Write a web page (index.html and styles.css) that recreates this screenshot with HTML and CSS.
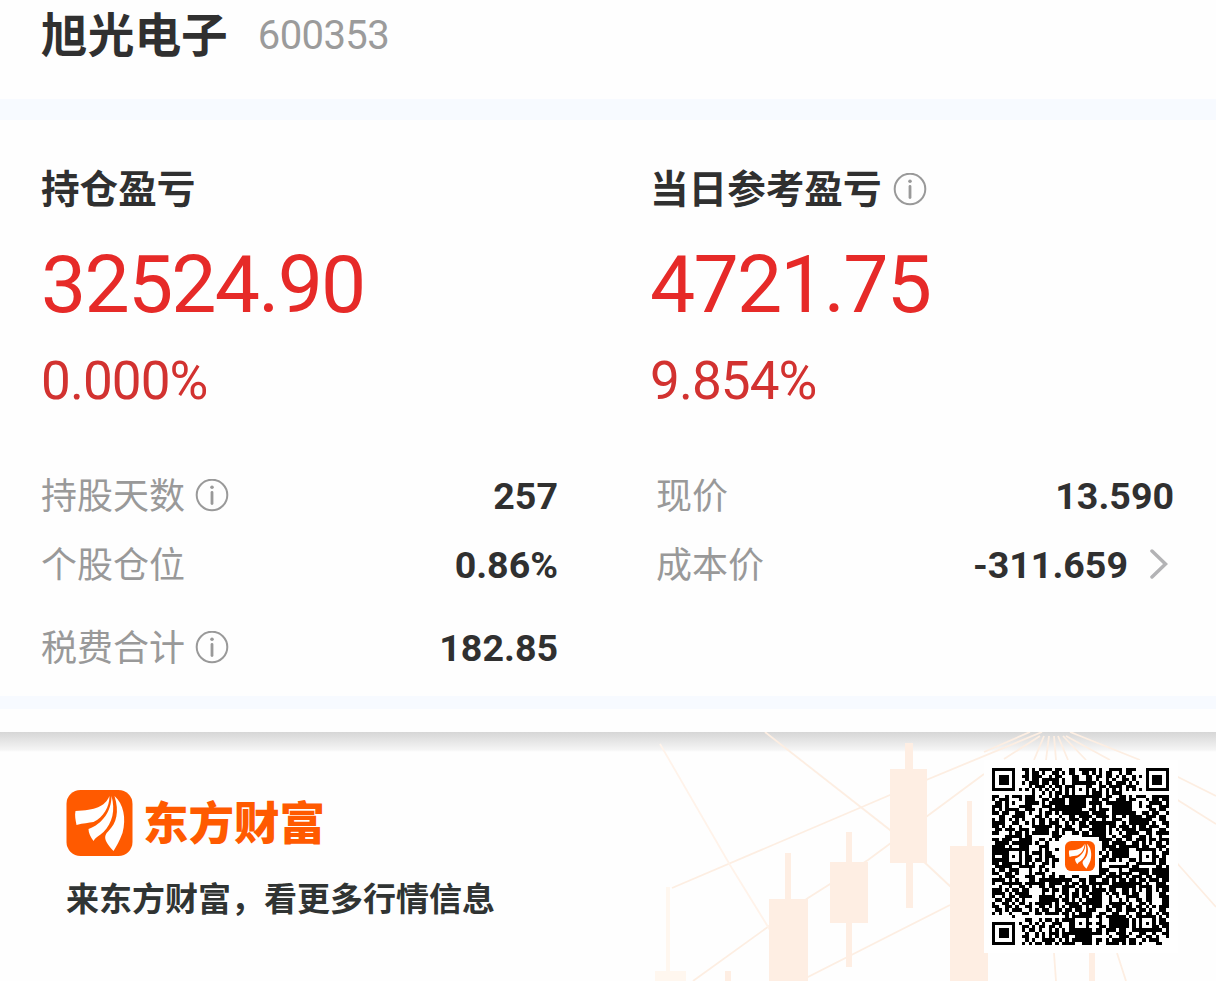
FILE: index.html
```html
<!DOCTYPE html>
<html lang="zh-CN">
<head>
    <meta charset="UTF-8">
    <meta name="viewport" content="width=device-width, initial-scale=1.0">
    <title>旭光电子 600353</title>
    <link rel="stylesheet" href="styles.css">
</head>
<body>
    <svg class="symbols" width="0" height="0">
        <symbol id="info" viewBox="0 0 34 34">
            <circle cx="17" cy="16" r="15.3" fill="none" stroke="currentColor" stroke-width="2"/>
            <circle cx="17" cy="8.3" r="1.8" fill="currentColor"/>
            <path d="M17 13.5v11" stroke="currentColor" stroke-width="2.8" stroke-linecap="round"/>
        </symbol>
        <symbol id="logo" viewBox="0 0 66 66">
            <rect width="66" height="66" rx="14" fill="#ff5a00"/>
            <path fill="#fff" d="M43 6C38 17 29 20 9 21C8 25 9 30 10 35C17 33 22 33 27 32C37 27 43 17 43 6Z"/>
            <path fill="#fff" d="M45 6C45 21 36 34 22 39C22 43 24 47 27 51C29 47 33 46 37 42C46 33 49 20 45 6Z"/>
            <path fill="#fff" d="M48 6C53 22 50 33 42 41C37 46 37 50 47 61C50 56 53 51 56 43C60 28 57 14 48 6Z"/>
        </symbol>
    </svg>

    <header>
        <h1>旭光电子</h1>
        <span class="code">600353</span>
    </header>

    <main>
        <section class="summary">
            <div class="profit">
                <h2>持仓盈亏</h2>
                <div class="amount">32524.90</div>
                <div class="rate">0.000%</div>
            </div>
            <div class="profit">
                <h2>当日参考盈亏 <svg class="info"><use href="#info"/></svg></h2>
                <div class="amount">4721.75</div>
                <div class="rate">9.854%</div>
            </div>
        </section>

        <section class="details">
            <div class="list">
                <div class="row"><span class="label">持股天数</span><svg class="info"><use href="#info"/></svg><b>257</b></div>
                <div class="row"><span class="label">个股仓位</span><b>0.86%</b></div>
                <div class="row last"><span class="label">税费合计</span><svg class="info"><use href="#info"/></svg><b>182.85</b></div>
            </div>
            <div class="list right">
                <div class="row"><span class="label">现价</span><b>13.590</b></div>
                <div class="row"><span class="label">成本价</span><b>-311.659</b>
                    <svg class="arrow" viewBox="0 0 18 32"><path d="M2 2L15.5 15L2 28"/></svg>
                </div>
            </div>
        </section>
    </main>

    <footer>
        <svg class="chart" viewBox="640 732 576 249">
            <g fill="none" stroke="#fdeee2" stroke-width="1.8">
                <path d="M765 732L890 830L952 888"/>
                <path d="M672 888L890 795L1042 732"/>
                <path d="M693 981L808 898L868 860L984 774"/>
                <path d="M800 981L950 905"/>
                <path d="M660 744L730 865L770 930" stroke="#fff3ea"/>
                <path d="M1030 732L984 752M1040 736L1004 759M1044 736L1034 760M1049 736L1046 760M1054 736L1056 760M1058 736L1068 760M1063 736L1086 760M1066 736L1110 760M1070 732L1140 760"/>
                <path d="M1176 776L1216 796M1176 799L1216 824M1176 862L1216 907M1054 953L1056 981M1117 953L1126 981"/>
            </g>
            <g class="candles">
                <path d="M785 853h6v46h17v82h-39v-82h16z"/>
                <path d="M846 832h6v30h16v61h-16v44h-6v-44h-16v-61h16z"/>
                <path d="M905 743h8v26h14v94h-14v45h-7v-45h-16v-94h15z"/>
                <path d="M967 801h5v45h16v135h-38v-135h17z"/>
                <path d="M1089 953h6v28h-6zM725 971h6v10h-6z"/>
                <path class="faint" d="M666 887h4v84h16v10h-31v-10h11z"/>
            </g>
        </svg>
        <div class="brand">
            <div class="logo-line">
                <svg class="logo"><use href="#logo"/></svg>
                <strong>东方财富</strong>
            </div>
            <p>来东方财富，看更多行情信息</p>
        </div>
        <div class="qr">
            <svg id="qr-code" viewBox="0 0 53 53" shape-rendering="crispEdges"></svg>
            <svg class="qr-logo"><use href="#logo"/></svg>
        </div>
    </footer>

    <script src="script.js"></script>
</body>
</html>
```

FILE: styles.css
```css
* {
    box-sizing: border-box;
}
body {
    margin: 0;
    width: 1216px;
    height: 981px;
    overflow: hidden;
    background-color: #fefefe;
    color: #303030;
    font-family: Roboto, "Noto Sans CJK SC", sans-serif;
}
h1, h2, p {
    margin: 0;
}
.symbols {
    position: absolute;
}
header {
    height: 120px;
    padding-left: 41px;
    display: flex;
    align-items: flex-start;
    gap: 30px;
    border-bottom: 21px solid #f7faff;
}
h1 {
    font-size: 46.7px;
    line-height: 73px;
    font-weight: 700;
}
.code {
    font-size: 40px;
    line-height: 72px;
    font-weight: 400;
    letter-spacing: -0.6px;
    color: #9b9b9b;
}
main {
    height: 589px;
    padding-top: 43px;
    border-bottom: 13px solid #f7faff;
}
.summary {
    display: grid;
    grid-template-columns: 609px 1fr;
    padding-left: 41px;
}
h2 {
    display: flex;
    align-items: center;
    gap: 12px;
    font-size: 38.6px;
    line-height: 54px;
    font-weight: 700;
}
.info {
    width: 34px;
    height: 34px;
    color: #999;
}
.amount {
    height: 131px;
    font-size: 80.5px;
    line-height: 135px;
    letter-spacing: -1.8px;
    color: #e62a28;
}
.rate {
    height: 66px;
    font-size: 53px;
    line-height: 66px;
    letter-spacing: -0.9px;
    color: #d23230;
}
.details {
    display: grid;
    grid-template-columns: 517px 518px;
    column-gap: 98px;
    padding: 47px 0 0 41px;
}
.row {
    height: 69px;
    display: flex;
    align-items: center;
    font-size: 36px;
}
.row.last {
    margin-top: 14px;
}
.row .info {
    margin-left: 10px;
}
.label {
    color: #999;
    font-weight: 400;
    line-height: 50px;
    padding-top: 2px;
}
.row b {
    margin-left: auto;
    font-size: 37.6px;
    font-weight: 700;
}
.arrow {
    width: 18px;
    height: 32px;
    margin: 0 6px 0 22px;
    fill: none;
    stroke: #b3b3b5;
    stroke-width: 3.5;
    stroke-linecap: round;
}
footer {
    position: relative;
    height: 249px;
    margin-top: 23px;
    padding: 28px 38px 0 66px;
    display: flex;
    justify-content: space-between;
    background: linear-gradient(#d6d6d6, #f5f5f5 18px, #fefefe 20px);
}
.chart {
    position: absolute;
    top: 0;
    right: 0;
    width: 576px;
    height: 249px;
}
.candles {
    fill: #feeee3;
}
.candles .faint {
    fill: #fff7ef;
}
.brand {
    padding-top: 30px;
}
.logo-line {
    display: flex;
    align-items: center;
    gap: 10px;
    height: 66px;
}
.logo {
    width: 67px;
    height: 66px;
}
.logo-line strong {
    font-size: 45.5px;
    line-height: 66px;
    padding-top: 3px;
    font-weight: 900;
    color: #ff5a00;
}
.brand p {
    margin-top: 19px;
    font-size: 33px;
    line-height: 50px;
    font-weight: 600;
    color: #303433;
}
.qr {
    position: relative;
    width: 194px;
    height: 193px;
    padding: 8px;
    background-color: #fff;
}
#qr-code {
    display: block;
    width: 177px;
    height: 177px;
}
.qr-logo {
    position: absolute;
    left: 81px;
    top: 81px;
    width: 30px;
    height: 30px;
    box-sizing: content-box;
    margin: -4px;
    border: 4px solid #fff;
    background-color: #fff;
}
```

FILE: script.js
```javascript
const rows = [
    "........ .##.#.####.##..##.#####.#..####.###..........",
    "........ ..#.##.#..##.#.##..##.#.#.##..#.##...........",
    ".........##.###..#.##...##..##.##.##.#.#..#.#.........",
    "..........#.##.#####.#..##..##.#..#.#..##.#...........",
    ".........#.###.##.##.#..##.####.#.##.###.#.#..........",
    "...........#.###.#.##.####.###..##.####.###...........",
    "......................................................",
    "............#..#.#.##.#.....#.###.#.###...............",
    "##..#..##.###.#..#.#.######..####.##..##.#.###..######",
    "#.###.#.#.###..##.####..####..##.##..###.##...#.##.##",
    ".##.#.#...####.#.#####.##.##.####.###.##.#..#..####.#",
    "###.#.#.####...###.##.#...##..#.#..#######..#.##..###",
    "#.#.####..###.#..########.#####.###.######.##..##.##.",
    "##.##..###.#..#.##.#.##.#..##.####..#####.#..##.##..#",
    "..##..####...##.#...#..##.####.####.#..#.####.###.##.",
    "#.##.###.#..#.##.#.#.#.###.##.#..#..###..#..#.##..##.",
    "####..##..#.#.##.###..#.#.##.##.#####..#.###..#.#..##",
    "##.#.##.#...#..#.#.##.##..###.#..#.##.###.#.##.###..#",
    ".##.##..###..####..#.####.#..#.#.###.#.####.####..##.",
    "##...#.##.#.#####.##.#..##.##.######..#.####..##.####",
    "..#.##.##.##.#.#..###......###.####.#..###..##.#..#..",
    "##.####.####..##.#.#..........#.####.##.##.###.##.###",
    ".####..###.#.#..#.............#..##.####..##.#.#.##.#",
    "####.##.##..#.###................####.######.##..###.",
    "##.##.#####..##.#..#.............#.##.##.#.######.#.#",
    ".#.#..#.#.#.###.##.............##.#.####.##.#...#..##",
    "#..##...#.##..#.###..............##.#.##.##.#.#.##.#.",
    "####.#..#.##.##.#.##............##.##.#..##.#...#.##.",
    "##.######.#.#..##.#............##.#######..######.##.",
    ".######.#####.##..#.............#..######.##..##.##.#",
    "#.##.#.##..#..#.#...............###...#..######.###..",
    "##..######.#.###..#............###.##.####..###.##.##",
    "..#.###..####..#.##.##..##...####.#####.#.###.##.#...",
    "####.#.##..##.###.#..###..##.##..##.#.##.##.##.###.##",
    "#..###.##.######..###.#.##.#.######.######.##.#..###.",
    "..#..##.##.#..##.##..####.###.#.#..###..##..####.####",
    "###.#.##.##.#..##.##.##..#.##.####.##..##.#.#.##.#.##",
    "####.######.##.#..#..##.##.#.##.#.#.##.##.##..##..##.",
    "#..#.#..####..##.##.#.#.##.##.###..#.#..####..##.####",
    ".##.##.#.#..##.#.###.##.#.#.###.##.#..#.#..##.##.#.##",
    "#..##.#.##.#.####..#..####.###.##..#####.#..##.##..##",
    "##..##.#..##..##.#.#.#.####.#.###.#.###.##.##.#.#.###",
    ".##.#.###..#.#.##..##.##.##.###...##.##.###.##.#..##.",
    "#.#..##..##..##.####.##.#.####..##..##..#..##.##.#.##",
    "......................#.######.##.######.#.######.#.#",
    "..........##..#.##.#.###...##...#..##..##.#.#...#.##.",
    "........#..#.#.#..###..##..###.##..#.####.#.#.#.#.###",
    ".........##.#.##.##.#..##..##...##.##..##.#.#...##.##",
    ".........#.##.#..#.#.#.######..##.###.##..######.##.#",
    "..........#..#.#.###.####.##.####.#..###.#..##..#..##",
    ".........##..#.#.#.#.##..#.###..##.#..###..##.##.#..#",
    "..........#.#..####.#.#.####...##.#.####.##..#.###..",
    ".........#.#.##.##.#.####..###.#..####.#.##.#....##"
];

const size = 53;
const grid = rows.map(row => [...row.replace(" ", "").padEnd(size, ".").slice(0, size)].map(c => c === "#"));

// Solid and empty areas: x, y, width, height, dark
const areas = [
    [13, 17, 4, 3, true], [12, 20, 6, 1, false],
    [23, 9, 4, 5, true], [21, 11, 2, 2, true], [27, 12, 2, 1, false],
    [36, 10, 6, 4, true], [33, 11, 3, 1, false], [43, 12, 4, 1, false],
    [30, 16, 4, 5, true], [34, 17, 1, 4, false], [42, 15, 4, 2, true],
    [36, 24, 5, 3, true], [34, 28, 6, 1, false], [41, 24, 2, 3, false],
    [50, 30, 3, 3, true], [46, 29, 3, 1, false], [8, 22, 3, 3, true],
    [11, 23, 3, 2, false], [8, 30, 2, 4, false], [14, 38, 4, 3, true],
    [12, 36, 2, 4, false], [30, 37, 3, 4, true], [33, 38, 2, 3, false],
    [38, 34, 5, 2, true], [28, 48, 2, 4, true], [30, 50, 4, 1, false],
    [25, 49, 3, 3, true], [36, 44, 3, 4, true], [48, 38, 2, 3, false],
    [0, 24, 4, 2, true], [0, 20, 3, 1, false], [17, 33, 4, 2, true]
];
areas.forEach(([x, y, w, h, dark]) => {
    for (let py = y; py < y + h; py++) {
        grid[py].fill(dark, x, x + w);
    }
});

function square(x, y, rings) {
    const radius = rings.length - 1;
    for (let dy = -radius; dy <= radius; dy++) {
        for (let dx = -radius; dx <= radius; dx++) {
            const px = x + dx;
            const py = y + dy;
            if (px >= 0 && py >= 0 && px < size && py < size) {
                grid[py][px] = rings[Math.max(Math.abs(dx), Math.abs(dy))];
            }
        }
    }
}

// Timing lines
for (let i = 8; i < 45; i++) {
    grid[6][i] = grid[i][6] = i % 2 === 0;
}

// Finder and alignment squares
[[3, 3], [49, 3], [3, 49]].forEach(([x, y]) => square(x, y, [true, true, false, true, false]));
[[26, 6], [6, 26], [46, 26], [26, 46], [46, 46]].forEach(([x, y]) => square(x, y, [true, false, true]));

let path = "";
grid.forEach((row, y) => row.forEach((dark, x) => {
    // Leave room for the logo
    const inLogo = x > 20 && x < 32 && y > 20 && y < 32;
    if (dark && !inLogo) {
        path += `M${x} ${y}h1v1h-1z`;
    }
}));
document.getElementById("qr-code").innerHTML = `<path d="${path}"/>`;
```
